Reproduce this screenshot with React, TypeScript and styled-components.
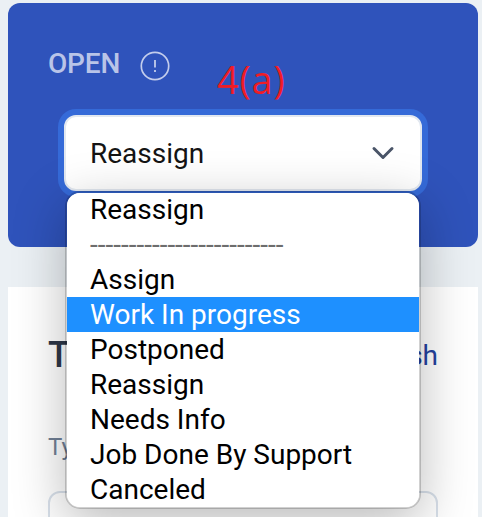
import React from 'react';
import styled, { createGlobalStyle } from 'styled-components';

const GlobalStyle = createGlobalStyle`
  * { box-sizing: border-box; }
  html, body { margin: 0; height: 517px; overflow: hidden; background: #edf2f7; }
  body { font-family: Roboto, "Liberation Sans", sans-serif; }
`;

const Page = styled.main`
  height: 517px;
  padding: 3px 4px 0 8px;
  overflow: hidden;
  background: #ebf0f4;
`;

const StatusCard = styled.section`
  position: relative;
  height: 244px;
  padding: 0 56px;
  border-radius: 12px;
  background: #2f53bb;
`;

const StatusHeader = styled.header`
  display: flex;
  height: 112px;
  margin-left: -16px;
`;

const StatusLabel = styled.span`
  width: 92px;
  padding-top: 44px;
  font-size: 28px;
  line-height: 33px;
  font-weight: 500;
  letter-spacing: -0.2px;
  color: #b9c4e8;
`;

const InfoIcon = styled.svg`
  width: 30px;
  height: 30px;
  margin-top: 48px;
`;

const Annotation = styled.span`
  margin: 50px 0 0 47px;
  font-family: "Open Sans", "Noto Sans", sans-serif;
  font-size: 38px;
  line-height: 52px;
  letter-spacing: 0.8px;
  color: #f01c26;
`;

const SelectBox = styled.div`
  display: flex;
  align-items: center;
  justify-content: space-between;
  width: 358px;
  height: 76px;
  padding: 0 25px 0 24px;
  border: 2px solid #e2e8f0;
  border-radius: 12px;
  background: #fff;
  box-shadow: 0 0 0 6px #356ad8;
  font-size: 28px;
  color: #141414;
`;

const Chevron = styled.svg`
  width: 24px;
  height: 16px;
`;

const Menu = styled.ul`
  position: absolute;
  z-index: 2;
  top: 188px;
  left: 57px;
  width: 356px;
  margin: 0;
  padding: 0;
  list-style: none;
  border: 2px solid rgba(0, 0, 0, 0.18);
  border-radius: 15px;
  background: #fff;
  background-clip: padding-box;
  box-shadow: 0 14px 52px rgba(0, 0, 0, 0.27);
  overflow: hidden;
`;

const Option = styled.li<{ $active?: boolean; $muted?: boolean }>`
  height: 35px;
  padding-left: 23px;
  font-size: 28px;
  line-height: 35px;
  white-space: nowrap;
  color: ${({ $active, $muted }) => ($active ? '#fff' : $muted ? '#6d6d6d' : '#000')};
  background: ${({ $active }) => ($active ? '#1e90ff' : '#fff')};

  &:first-child { margin-top: -1px; }
`;

const DetailsCard = styled.section`
  height: 240px;
  margin: 40px 0 0;
  width: 470px;
  padding: 50px 40px 0;
  background: #fff;
`;

const DetailsHeader = styled.header`
  display: flex;
  justify-content: space-between;
  height: 96px;
`;

const Title = styled.h2`
  margin: 0;
  font-size: 36px;
  line-height: 36px;
  font-weight: 500;
  color: #2d3748;
`;

const ActionLink = styled.a`
  padding-top: 2px;
  font-size: 28px;
  line-height: 33px;
  color: #24429f;
`;

const FieldLabel = styled.label`
  display: block;
  height: 58px;
  font-size: 24px;
  line-height: 28px;
  color: #718096;
`;

const Field = styled.div`
  height: 76px;
  border: 2px solid #d8e0ea;
  border-radius: 12px;
`;

const options = [
  { label: 'Reassign' },
  { label: '-------------------------', muted: true },
  { label: 'Assign' },
  { label: 'Work In progress', active: true },
  { label: 'Postponed' },
  { label: 'Reassign' },
  { label: 'Needs Info' },
  { label: 'Job Done By Support' },
  { label: 'Canceled' },
];

export default function App() {
  return (
    <>
      <GlobalStyle />
      <Page>
        <StatusCard>
          <StatusHeader>
            <StatusLabel>OPEN</StatusLabel>
            <InfoIcon viewBox="0 0 30 30" fill="none" stroke="#c3cdec">
              <circle cx="15" cy="15" r="13.7" strokeWidth="1.7" />
              <path d="M15 9v7.5M15 19v2" strokeWidth="1.8" />
            </InfoIcon>
            <Annotation>4(a)</Annotation>
          </StatusHeader>
          <SelectBox>
            Reassign
            <Chevron viewBox="0 0 24 16" fill="none" stroke="#4a5568" strokeWidth="3" strokeLinecap="round" strokeLinejoin="round">
              <path d="M3 3.5l9 9 9-9" />
            </Chevron>
          </SelectBox>
          <Menu>
            {options.map((o, i) => (
              <Option key={i} $active={o.active} $muted={o.muted}>{o.label}</Option>
            ))}
          </Menu>
        </StatusCard>
        <DetailsCard>
          <DetailsHeader>
            <Title>T</Title>
            <ActionLink>sh</ActionLink>
          </DetailsHeader>
          <FieldLabel>Ty</FieldLabel>
          <Field />
        </DetailsCard>
      </Page>
    </>
  );
}
